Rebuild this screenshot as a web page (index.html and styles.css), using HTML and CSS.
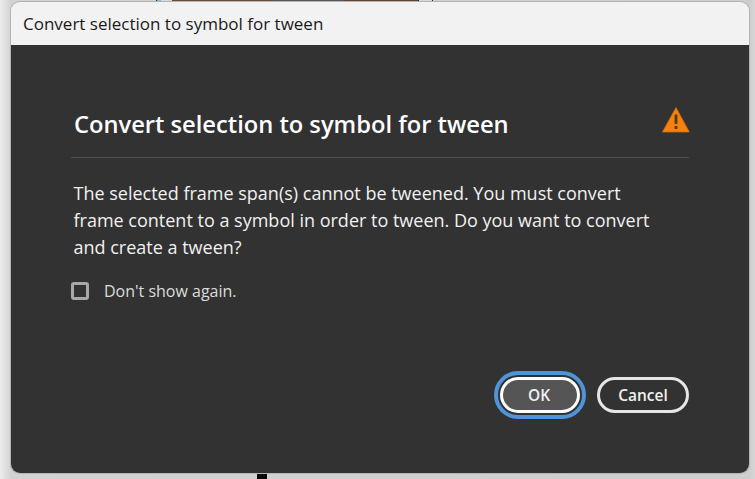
FILE: index.html
```html
<!DOCTYPE html>
<html lang="en">
<head>
<meta charset="utf-8">
<title>Convert selection to symbol for tween</title>
<link rel="stylesheet" href="styles.css">
</head>
<body>
<div class="backdrop">
  <div class="backdrop-photo"></div>
  <div class="backdrop-foot"></div>
  <section class="window">
    <header class="titlebar">Convert selection to symbol for tween</header>
    <main class="dialog">
      <div class="dialog-head">
        <h1 class="heading">Convert selection to symbol for tween</h1>
        <svg class="warn" width="28" height="26" viewBox="0 0 28 26" aria-hidden="true">
          <path d="M14 .5 L27.3 25 H.4 Z" fill="#f6820d" stroke="#c96c10" stroke-width=".8"/>
          <rect x="12.6" y="7.5" width="2.8" height="9.5" fill="#513a1c"/>
          <rect x="12.6" y="19" width="2.8" height="3" fill="#513a1c"/>
        </svg>
      </div>
      <p class="message">The selected frame span(s) cannot be tweened. You must convert frame content to a symbol in order to tween. Do you want to convert and create a tween?</p>
      <label class="check-row"><span class="check"></span><span class="check-label">Don't show again.</span></label>
      <div class="actions">
        <button class="btn btn-primary">OK</button>
        <button class="btn">Cancel</button>
      </div>
    </main>
  </section>
</div>
</body>
</html>
```
FILE: styles.css
```css
* { box-sizing: border-box; }
html, body { margin: 0; height: 100%; }
body { overflow: hidden; background: #c9c9c9; }
.backdrop {
  position: relative;
  width: 755px;
  height: 479px;
  padding: 2px 6px 6px 11px;
  background: linear-gradient(90deg, #ececec 0, #d2d2d2 11px, #cdcdcd 749px, #d6d6d6 755px);
}
.backdrop-photo {
  position: absolute;
  left: 156px; top: 0;
  width: 277px; height: 3px;
  background: linear-gradient(90deg,
    #2a2a2a 0 1px, #8fb4d0 1px 5px, #d8d8d8 5px 16px,
    #6a4c30 16px 116px, #555 116px 189px, #5e4232 189px 262px,
    #2a2a2a 262px 263px, #d8d8d8 263px 276px, #2a2a2a 276px 277px);
}
.backdrop-foot {
  position: absolute;
  left: 257px; top: 473px;
  width: 10px; height: 6px;
  background: #0a0a0a;
}
.window {
  position: relative;
  width: 738px;
  height: 471px;
  border-radius: 9px;
  overflow: hidden;
  display: flex;
  flex-direction: column;
  box-shadow: 0 0 0 1px #b4b4b4;
}
.titlebar {
  flex: none;
  height: 43px;
  padding: 0 12px;
  display: flex;
  align-items: center;
  background: #f2f2f3;
  color: #1a1a1a;
  font: 17px/1 "Open Sans", sans-serif;
}
.dialog {
  flex: 1;
  display: flex;
  flex-direction: column;
  padding: 0 60px;
  background: #323232;
  color: #f0f0f0;
  font-family: "Open Sans", sans-serif;
}
.dialog-head {
  height: 71px;
  margin-top: 42px;
  padding: 0 0 0 3px;
  display: flex;
  align-items: flex-start;
  justify-content: space-between;
  border-bottom: 1px solid #4f4f4f;
}
.heading {
  margin: 0;
  font-size: 23.7px;
  line-height: 32px;
  padding-top: 21px;
  font-weight: 600;
  color: #fff;
}
.warn { margin-top: 20px; margin-right: -1px; }
.message {
  margin: 22px 0 0 2.5px;
  width: 600px;
  font-size: 18px;
  line-height: 27px;
  color: #f0f0f0;
}
.check-row {
  margin-top: 19px;
  display: flex;
  align-items: center;
  gap: 15px;
  font-size: 16px;
  color: #dcdcdc;
}
.check {
  width: 18px; height: 18px;
  border: 3px solid #a8a8a8;
  border-radius: 3px;
}
.actions {
  margin-top: auto;
  margin-bottom: 60px;
  display: flex;
  justify-content: flex-end;
  gap: 17px;
}
.btn {
  width: 92px;
  height: 36px;
  padding: 1px 0 0;
  border: 3px solid #e6e6e6;
  border-radius: 18px;
  background: transparent;
  color: #f0f0f0;
  font: 600 15.5px/1 "Open Sans", sans-serif;
}
.btn-primary {
  width: 80px;
  padding-right: 2px;
  background: #555;
  border-color: #fff;
  outline: 4px solid #4f94d9;
  outline-offset: 2px;
}
```
